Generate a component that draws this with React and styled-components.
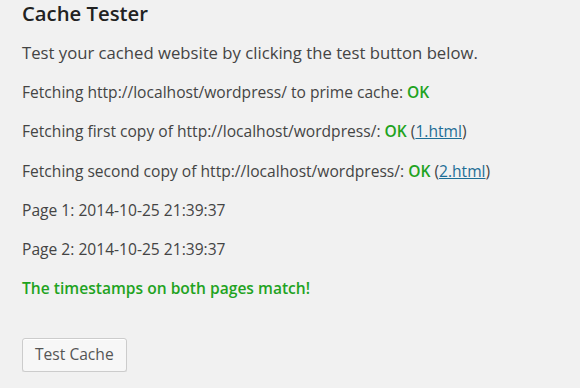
import React from 'react';
import styled, { createGlobalStyle } from 'styled-components';

const GlobalStyle = createGlobalStyle`
  html, body {
    margin: 0;
    padding: 0;
    background: #f1f1f1;
  }
  body {
    font-family: "Open Sans", "Liberation Sans", sans-serif;
    font-size: 15.6px;
    color: #444;
  }
`;

const Wrap = styled.div`
  padding: 0 22px;
`;

const Title = styled.h2`
  font-size: 20.3px;
  font-weight: 600;
  color: #222;
  margin: 0;
  padding: 1px 0 0;
  line-height: 24px;
`;

const Line = styled.p`
  margin: ${(p) => (p.$lead ? '16px' : '15.9px')} 0 0;
  font-size: ${(p) => (p.$lead ? '16.7px' : '15.6px')};
  line-height: 23.4px;

  & + & {
    margin-top: 15.9px;
  }
`;

const FirstFetch = styled(Line)`
  && {
    margin-top: 16.6px;
  }
`;

const Ok = styled.strong`
  color: #1fa31f;
  font-weight: 600;
`;

const Success = styled(Line)`
  color: #1fa31f;
  font-weight: 600;
`;

const Link = styled.a`
  color: #1e6e96;
  text-decoration: underline;
`;

const Button = styled.button`
  margin-top: 37px;
  height: 34px;
  padding: 0 12px 1px;
  font-family: inherit;
  font-size: 15.6px;
  color: #555;
  background: #f7f7f7;
  border: 1px solid #ccc;
  border-radius: 3px;
  box-shadow: inset 0 1px 0 #fff, 0 1px 0 rgba(0, 0, 0, 0.08);
  cursor: pointer;
`;

const url = 'http://localhost/wordpress/';

export default function App() {
  return (
    <>
      <GlobalStyle />
      <Wrap>
        <Title>Cache Tester</Title>
        <Line $lead>Test your cached website by clicking the test button below.</Line>
        <FirstFetch>
          Fetching {url} to prime cache: <Ok>OK</Ok>
        </FirstFetch>
        <Line>
          Fetching first copy of {url}: <Ok>OK</Ok> (<Link href="#">1.html</Link>)
        </Line>
        <Line>
          Fetching second copy of {url}: <Ok>OK</Ok> (<Link href="#">2.html</Link>)
        </Line>
        <Line>Page 1: 2014-10-25 21:39:37</Line>
        <Line>Page 2: 2014-10-25 21:39:37</Line>
        <Success>The timestamps on both pages match!</Success>
        <Button>Test Cache</Button>
      </Wrap>
    </>
  );
}
